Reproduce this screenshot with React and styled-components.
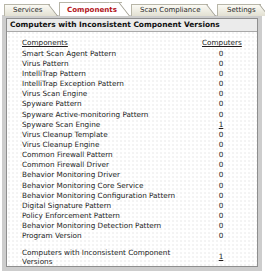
import React from "react";
import styled, { createGlobalStyle } from "styled-components";

const GlobalStyle = createGlobalStyle`
   html, body {
      margin: 0;
      padding: 0;
      background: #ffffff;
   }
   body {
      font-family: "DejaVu Sans", Verdana, sans-serif;
      color: #222;
   }
`;

const Page = styled.div`
   width: 265px;
   height: 273px;
   padding: 2px 3px 0 2px;
   box-sizing: border-box;
   overflow: hidden;
`;

// tabs
const TabBar = styled.div`
   display: flex;
   align-items: flex-end;
   height: 14px;
   padding-left: 2px;
   position: relative;
   z-index: 1;
`;

const Tab = styled.div`
   position: relative;
   height: ${p => (p.active ? "14px" : "12px")};
   width: ${p => p.w}px;
   flex-shrink: 0;
   margin-right: 9px;
   padding-left: ${p => p.pad}px;
   box-sizing: border-box;
   border-top: 1px solid #b8b6a8;
   border-left: 1px solid #b8b6a8;
   background: ${p => (p.active ? "#ffffff" : "linear-gradient(#fbfaf4, #e2e0d2)")};
   font-size: ${p => (p.active ? "7.1px" : "7px")};
   font-weight: ${p => (p.active ? "bold" : "normal")};
   color: ${p => (p.active ? "#b3141b" : "#2a2a2a")};
   line-height: ${p => (p.active ? "13px" : "11px")};
   white-space: nowrap;
   span{
      position: relative;
      z-index: 1;
   }
   &::after{
      content: "";
      position: absolute;
      top: -1px;
      right: -8px;
      width: 9px;
      height: 100%;
      background: ${p => (p.active ? "#ffffff" : "linear-gradient(#fbfaf4, #e2e0d2)")};
      border-top: 1px solid #b8b6a8;
      border-right: 1px solid #9c9a8c;
      transform: skewX(38deg);
      transform-origin: bottom left;
   }
`;

// panel
const Frame = styled.div`
   border: 4px solid #cdcdcd;
   border-top-width: 3px;
   height: 256px;
   box-sizing: border-box;
   margin-top: -1px;
`;

const Inner = styled.div`
   border: 1px solid #8f8f8f;
   height: 100%;
   box-sizing: border-box;
   background-color: #ffffff;
   background-image: radial-gradient(#e6e6e6 0.6px, transparent 0.8px);
   background-size: 4px 4px;
   display: flex;
   flex-direction: column;
`;

const Header = styled.div`
   background: #ebebeb;
   border-bottom: 1px solid #a9a9a9;
   height: 18px;
   padding-left: 3px;
   font-size: 7.45px;
   font-weight: bold;
   color: #111;
   display: flex;
   align-items: center;
`;

const List = styled.div`
   padding: 6px 0 0 15px;
   display: grid;
   grid-template-columns: 180px 38px;
   grid-auto-rows: 10.17px;
   font-size: 7.25px;
   color: #221c1c;
   align-items: center;
`;

const ColHead = styled.div`
   text-decoration: underline;
   text-align: ${p => (p.center ? "center" : "left")};
`;

const Name = styled.div`
   white-space: nowrap;
`;

const Count = styled.div`
   text-align: center;
   text-decoration: ${p => (p.link ? "underline" : "none")};
`;

const Total = styled.div`
   padding: 8px 0 0 15px;
   display: grid;
   grid-template-columns: 180px 38px;
   font-size: 7.25px;
   color: #221c1c;
   align-items: center;
   line-height: 8.5px;
`;

const TotalName = styled.div`
   width: 165px;
`;

const rows = [
   ["Smart Scan Agent Pattern", 0],
   ["Virus Pattern", 0],
   ["IntelliTrap Pattern", 0],
   ["IntelliTrap Exception Pattern", 0],
   ["Virus Scan Engine", 0],
   ["Spyware Pattern", 0],
   ["Spyware Active-monitoring Pattern", 0],
   ["Spyware Scan Engine", 1],
   ["Virus Cleanup Template", 0],
   ["Virus Cleanup Engine", 0],
   ["Common Firewall Pattern", 0],
   ["Common Firewall Driver", 0],
   ["Behavior Monitoring Driver", 0],
   ["Behavior Monitoring Core Service", 0],
   ["Behavior Monitoring Configuration Pattern", 0],
   ["Digital Signature Pattern", 0],
   ["Policy Enforcement Pattern", 0],
   ["Behavior Monitoring Detection Pattern", 0],
   ["Program Version", 0],
];

const App = () => {
   return (
      <Page>
         <GlobalStyle />
         <TabBar>
            <Tab w={46} pad={8}><span>Services</span></Tab>
            <Tab w={63} pad={7} active><span>Components</span></Tab>
            <Tab w={77} pad={8}><span>Scan Compliance</span></Tab>
            <Tab w={44} pad={9}><span>Settings</span></Tab>
         </TabBar>
         <Frame>
            <Inner>
               <Header>Computers with Inconsistent Component Versions</Header>
               <List>
                  <ColHead>Components</ColHead>
                  <ColHead center>Computers</ColHead>
                  {rows.map(([name, n]) => (
                     <React.Fragment key={name}>
                        <Name>{name}</Name>
                        <Count link={n > 0}>{n}</Count>
                     </React.Fragment>
                  ))}
               </List>
               <Total>
                  <TotalName>Computers with Inconsistent Component Versions</TotalName>
                  <Count link>1</Count>
               </Total>
            </Inner>
         </Frame>
      </Page>
   );
}

export default App;
